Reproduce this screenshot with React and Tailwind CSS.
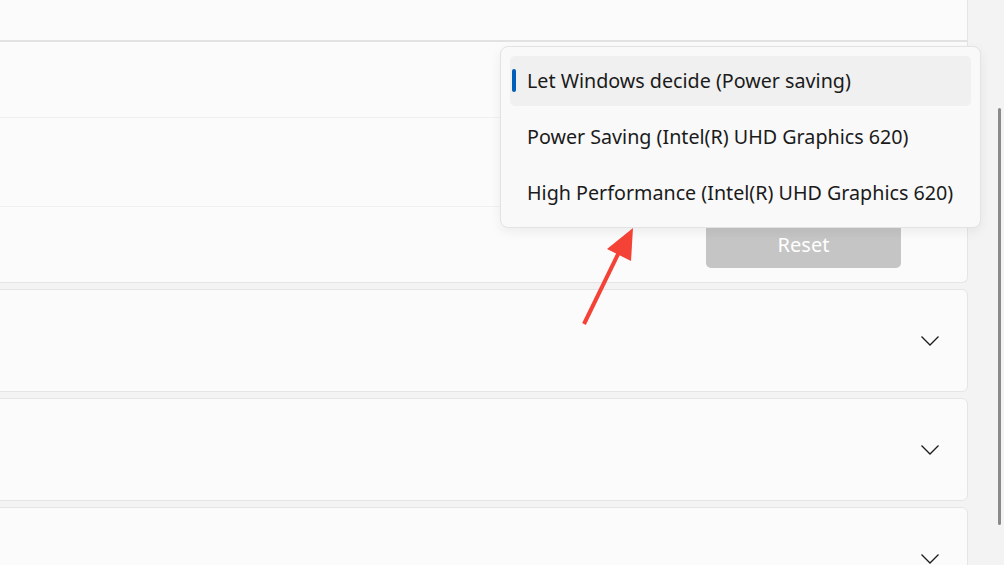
import React from 'react';

const OPTIONS = [
  'Let Windows decide (Power saving)',
  'Power Saving (Intel(R) UHD Graphics 620)',
  'High Performance (Intel(R) UHD Graphics 620)',
];

function Chevron() {
  return (
    <svg width="20" height="12" viewBox="0 0 20 12" fill="none" className="text-[#1b1b1b]">
      <path d="M1.5 1.5 L10 10 L18.5 1.5" stroke="currentColor" strokeWidth="1.3" />
    </svg>
  );
}

function CollapsedCard() {
  return (
    <div className="h-[103px] shrink-0 -ml-2 bg-[#fbfbfb] border border-[#e5e5e5] rounded-md flex items-center justify-end pr-[27px]">
      <Chevron />
    </div>
  );
}

export default function App() {
  return (
    <div className="relative w-[1004px] h-[565px] overflow-hidden bg-[#f3f3f3]" style={{ fontFamily: '"Noto Sans", "Open Sans", sans-serif' }}>
      <div className="flex h-full">
        <div className="w-[968px] flex flex-col gap-[6px] -mt-2">
          {/* expanded card: header + content */}
          <div className="-ml-2 shrink-0">
            <div className="h-[50px] bg-[#fbfbfb] border border-[#e5e5e5] border-b-2 border-b-[#e2e2e2] rounded-t-md" />
            <div className="bg-[#fbfbfb] border border-t-0 border-[#e5e5e5] rounded-b-md">
              <div className="h-[76px] border-b border-[#f0f0f0]" />
              <div className="h-[89px] border-b border-[#f0f0f0]" />
              <div className="h-[75px] flex items-center justify-end pr-[66px]">
                <button className="w-[195px] h-[45px] mt-px rounded-[5px] bg-[#c5c5c5] text-white text-[20px]">Reset</button>
              </div>
            </div>
          </div>
          <CollapsedCard />
          <CollapsedCard />
          <CollapsedCard />
        </div>
        <div className="flex-1 flex justify-end pr-[3px] pt-[108px] pb-[40px]">
          <div className="w-[3px] h-[417px] rounded-full bg-[#8a8a8a]" />
        </div>
      </div>

      {/* dropdown flyout */}
      <div className="absolute left-[500px] top-[46px] w-[481px] bg-[#f9f9f9] border border-[#e3e3e3] rounded-[8px] shadow-[0_4px_12px_rgba(0,0,0,0.06)] p-[9px] flex flex-col gap-[6px]">
        {OPTIONS.map((o, i) => (
          <div key={o} className={`relative h-[50px] shrink-0 rounded-[5px] flex items-center pl-[17px] text-[19.7px] text-[#1b1b1b] ${i === 0 ? 'bg-[#f0f0f0]' : ''}`}>
            {i === 0 && <span className="absolute left-[2px] top-[13px] w-[4px] h-[23px] rounded-full bg-[#005fb8]" />}
            {o}
          </div>
        ))}
      </div>

      {/* annotation arrow */}
      <svg className="absolute left-0 top-0 pointer-events-none" width="1004" height="565">
        <line x1="584" y1="324" x2="622" y2="246" stroke="#f44336" strokeWidth="4" />
        <polygon points="633,228 607,249 631,261" fill="#f44336" />
      </svg>
    </div>
  );
}
